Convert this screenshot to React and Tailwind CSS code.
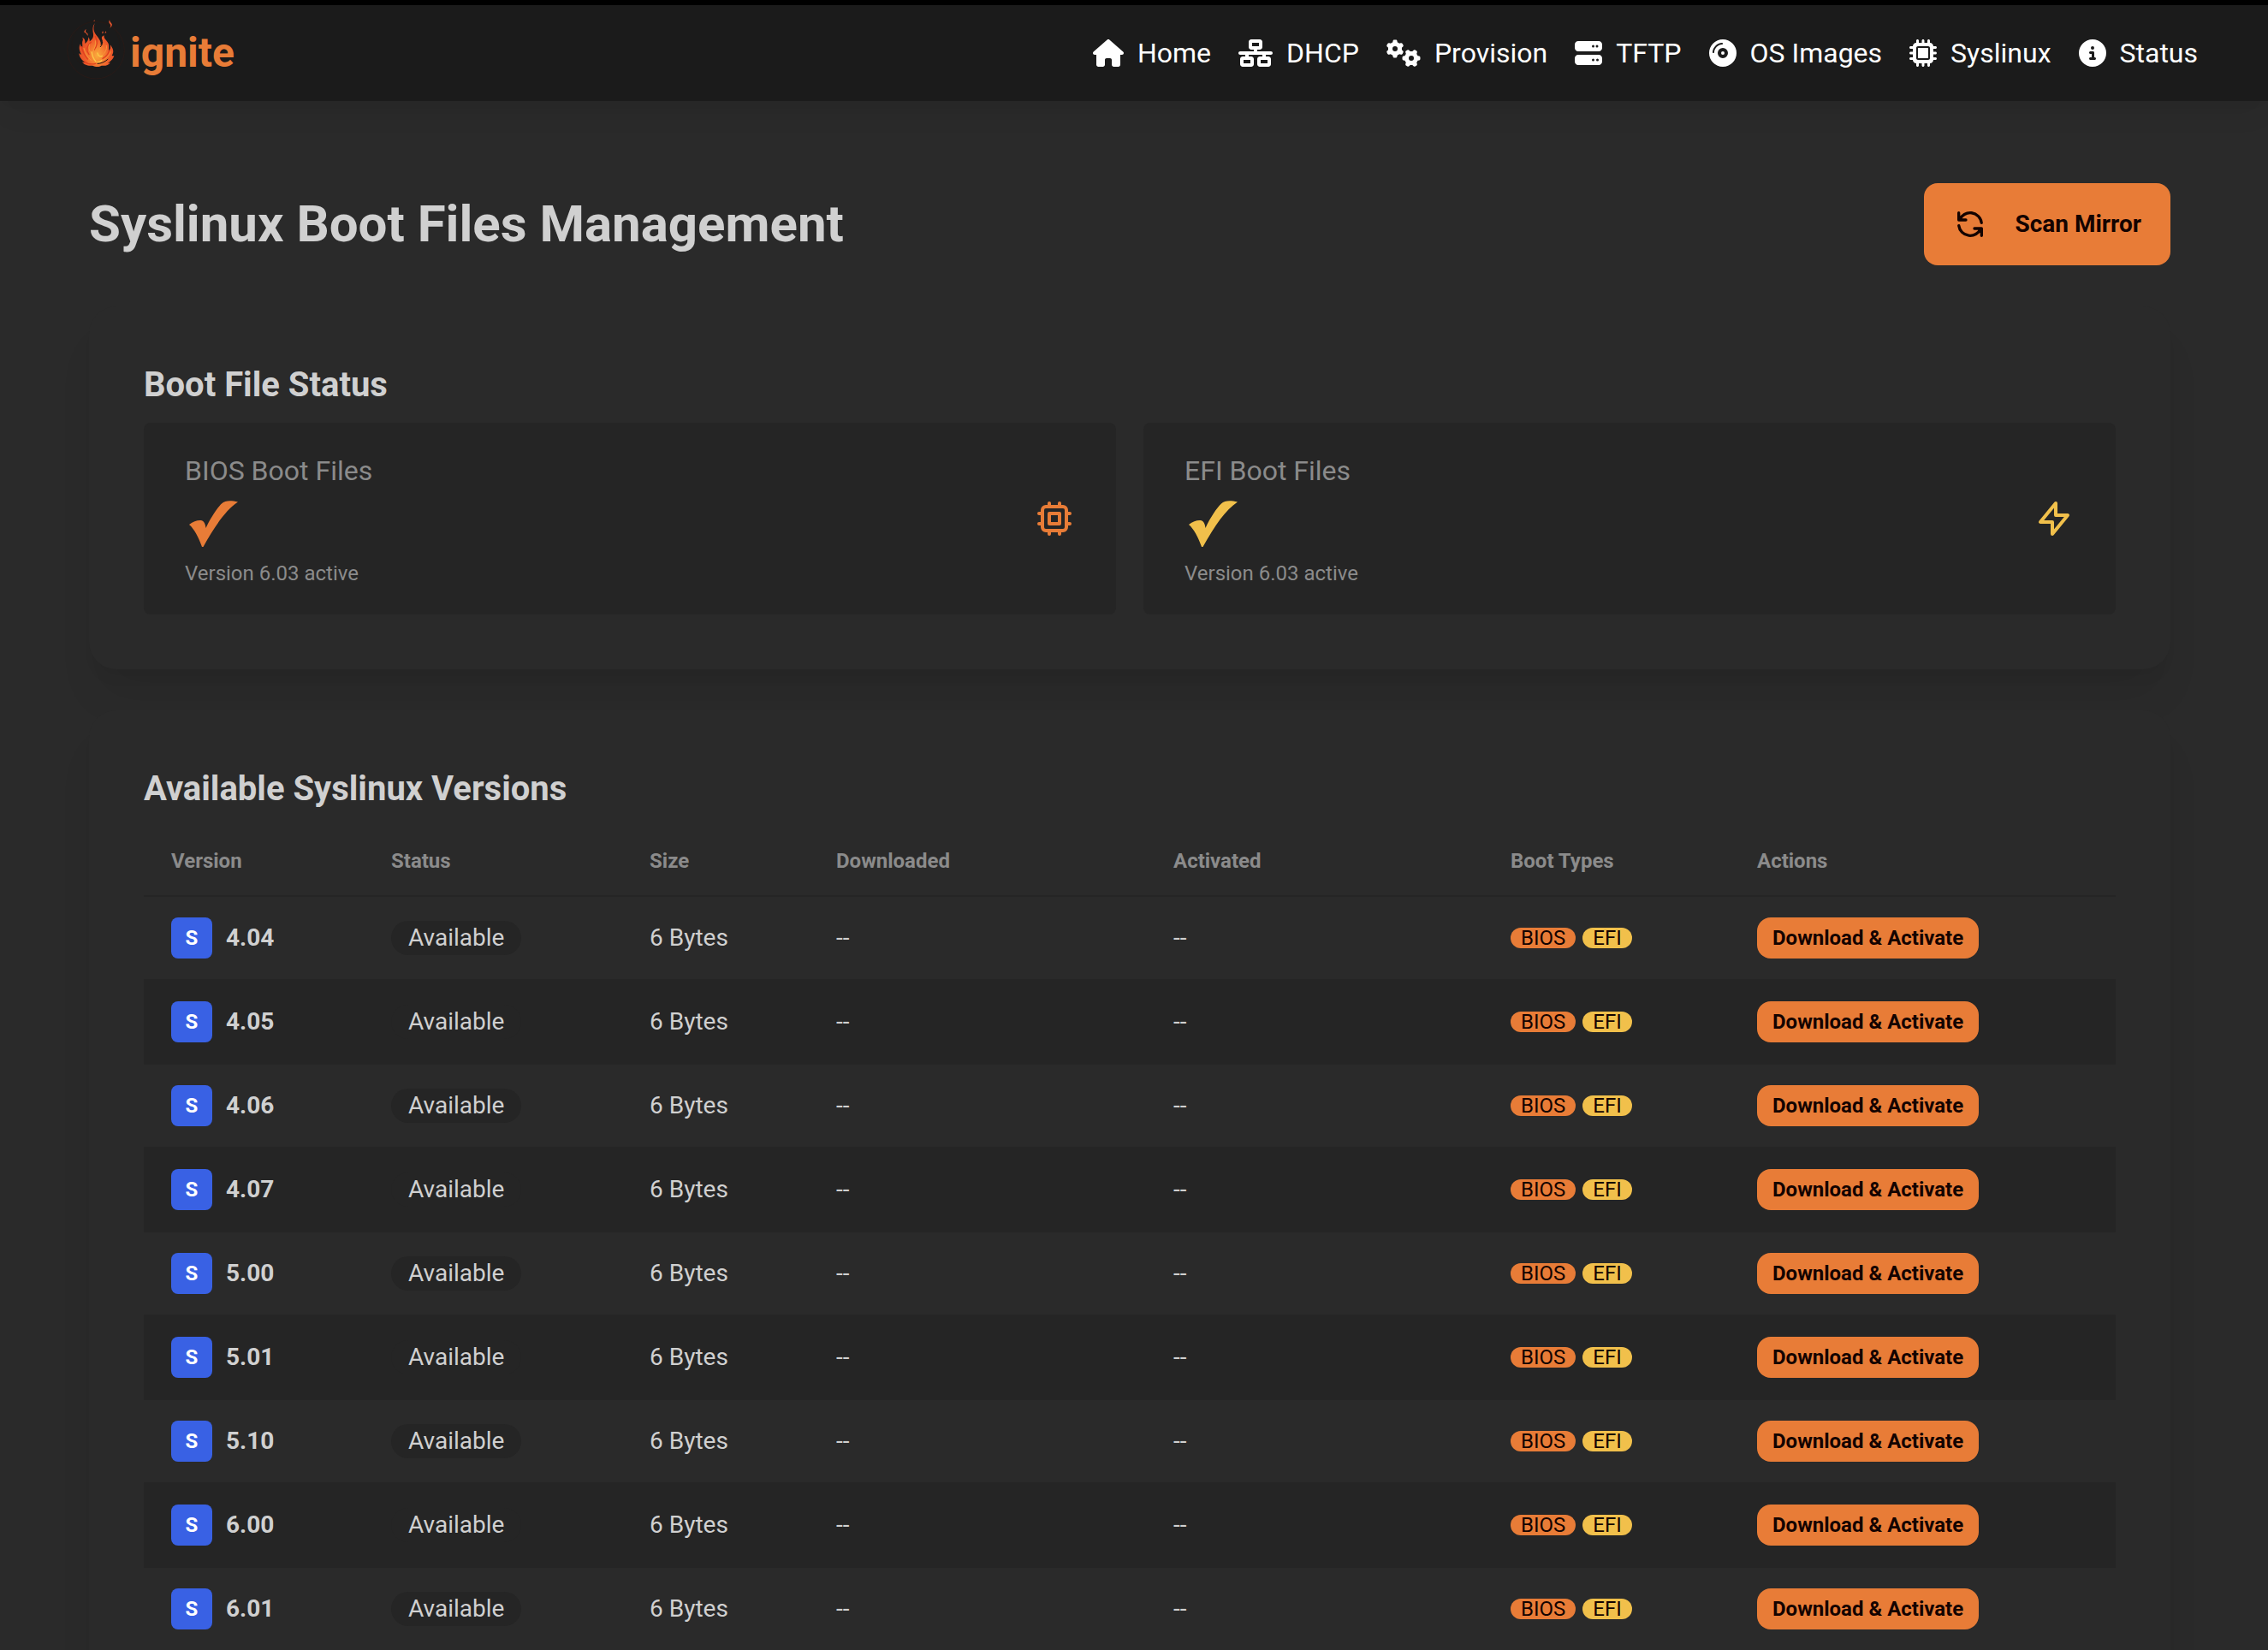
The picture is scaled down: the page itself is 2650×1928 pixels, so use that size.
import React from "react";
import {
  FaHouse,
  FaNetworkWired,
  FaGears,
  FaServer,
  FaCompactDisc,
  FaMicrochip,
  FaCircleInfo,
} from "react-icons/fa6";

const NAV = [
  { label: "Home", Icon: FaHouse, width: "w-9" },
  { label: "DHCP", Icon: FaNetworkWired, width: "w-10" },
  { label: "Provision", Icon: FaGears, width: "w-10" },
  { label: "TFTP", Icon: FaServer, width: "w-8" },
  { label: "OS Images", Icon: FaCompactDisc, width: "w-8" },
  { label: "Syslinux", Icon: FaMicrochip, width: "w-8" },
  { label: "Status", Icon: FaCircleInfo, width: "w-8" },
];

const VERSIONS = ["4.04", "4.05", "4.06", "4.07", "5.00", "5.01", "5.10", "6.00", "6.01"];

function FlameLogo() {
  return (
    <svg viewBox="18 30 204 240" className="h-20 w-[68px] shrink-0" aria-hidden="true">
      <defs>
        <radialGradient id="flame" cx="0.52" cy="0.74" r="0.62">
          <stop offset="0" stopColor="#f9ac3c" />
          <stop offset="0.3" stopColor="#f58232" />
          <stop offset="0.6" stopColor="#ee5a2a" />
          <stop offset="1" stopColor="#e04a24" />
        </radialGradient>
      </defs>
      <circle cx="120" cy="140" r="100" fill="none" stroke="#2a1a17" strokeWidth="2.5" />
      <circle cx="120" cy="122" r="84" fill="none" stroke="#211917" strokeWidth="2" />
      <path
        fill="url(#flame)"
        d="M117 45C108 62 113 76 122 88C132 101 139 109 137 124C144 117 146 109 141 100C139 94 143 90 149 88C147 97 154 103 160 110C168 120 166 132 165 142C171 138 173 130 170 121C181 134 185 147 176 158C179 160 181 160 184 159C181 172 172 178 162 186C166 185 170 184 172 182C164 193 152 196 140 194C130 200 118 198 108 194C92 196 77 191 72 180C76 183 80 184 84 183C72 176 62 166 61 150C64 153 66 155 69 155C61 140 60 127 66 118C67 125 68 129 72 133C75 121 70 116 74 106C76 100 74 98 72 95C82 98 83 108 82 117C89 112 95 104 94 94C97 99 99 104 98 109C109 101 112 94 111 83C109 69 107 56 117 45Z"
      />
      <path
        fill="none"
        stroke="#e0401f"
        strokeWidth="4"
        strokeLinecap="round"
        d="M70 128C73 145 80 158 91 171M103 112C88 125 84 139 96 155M118 92C128 110 126 124 114 139M166 143C163 155 155 163 144 169M79 179C92 190 107 190 119 187"
      />
      <path
        fill="none"
        stroke="#f8983a"
        strokeWidth="3"
        strokeLinecap="round"
        d="M78 133C82 150 90 163 103 176M98 120C93 133 97 143 107 154M119 107C122 122 113 132 111 146C110 158 114 166 120 178M137 130C127 143 127 154 134 164M157 124C160 139 151 149 143 157M172 146C167 160 155 170 142 177"
      />
      <path
        fill="none"
        stroke="#fbc848"
        strokeWidth="4"
        strokeLinecap="round"
        d="M106 146C106 160 112 170 120 180M126 150C129 160 134 164 142 160M140 176C134 181 130 183 126 181"
      />
      <path
        fill="none"
        stroke="#231512"
        strokeWidth="3"
        strokeLinecap="round"
        d="M162 172C150 182 138 187 126 187M136 128C140 124 143 118 143 112"
      />
      <path
        fill="#e0532c"
        d="M168 34C164 40 166 45 170 49C173 53 172 57 169 62C177 57 179 50 174 45C170 41 169 38 168 34ZM86 66C80 70 77 76 82 79C88 80 88 86 91 90C94 83 90 80 86 78C83 75 84 71 86 66ZM115 33L112 39L116 38ZM144 72L141 82L147 79ZM155 73L151 80L157 79Z"
      />
    </svg>
  );
}

function LineIcon({ d, className }) {
  return (
    <svg
      viewBox="0 0 24 24"
      fill="none"
      stroke="currentColor"
      strokeWidth="2"
      strokeLinecap="round"
      strokeLinejoin="round"
      className={className}
      aria-hidden="true"
    >
      <path d={d} />
    </svg>
  );
}

const REFRESH =
  "M4 4v5h.582m15.356 2A8.001 8.001 0 004.582 9m0 0H9m11 11v-5h-.581m0 0a8.003 8.003 0 01-15.357-2m15.357 2H15";
const CHIP =
  "M9 3v2m6-2v2M9 19v2m6-2v2M5 9H3m2 6H3m18-6h-2m2 6h-2M7 19h10a2 2 0 002-2V7a2 2 0 00-2-2H7a2 2 0 00-2 2v10a2 2 0 002 2zM9 9h6v6H9V9z";
const BOLT = "M13 10V3L4 14h7v7l9-11h-7z";

function Card({ title, children }) {
  return (
    <section className="mt-12 rounded-[32px] bg-[#2a2a2a] p-16 shadow-[0_40px_50px_-10px_rgba(0,0,0,0.07),0_16px_20px_-12px_rgba(0,0,0,0.08)]">
      <h2 className="mb-4 text-[40px] leading-[56px] font-bold">{title}</h2>
      {children}
    </section>
  );
}

function Stat({ title, desc, icon, color }) {
  return (
    <div className="flex items-center justify-between rounded-lg bg-[#252525] px-12 py-8">
      <div>
        <div className="text-[32px] leading-[48px] text-[#8b8b8b]">{title}</div>
        <div className={`flex h-20 items-center ${color}`}>
          <svg viewBox="0 0 68 58" className="h-[58px] w-[68px]" fill="currentColor" role="img" aria-label="Active">
            <path d="M5 28C10 24 15 22.500 19 23C23 24 24 28 24.500 32C30 20 38 8 43 3.500C47-.5 54-.5 62 1.500C48 11 36 28 21.500 54H20C16 43 11 33 5 28Z" />
          </svg>
        </div>
        <div className="text-2xl leading-8 text-[#8b8b8b]">{desc}</div>
      </div>
      <LineIcon d={icon} className={`size-12 ${color}`} />
    </div>
  );
}

export default function App() {
  return (
    <div className="h-screen overflow-hidden bg-[#2a2a2a] font-['Roboto',sans-serif] text-[#d0d0d0]">
      <header className="flex h-[118px] items-center justify-between border-t-[6px] border-black bg-[#1b1b1b] pr-[82px] pl-[78px] shadow-[0_20px_30px_-6px_rgba(0,0,0,0.06),0_8px_12px_-8px_rgba(0,0,0,0.05)]">
        <a href="#home" className="flex items-center gap-1.5 text-5xl leading-none font-bold text-[#e87c37]">
          <FlameLogo />
          ignite
        </a>
        <nav className="flex items-center gap-8 text-[32px] leading-[48px] text-white">
          {NAV.map(({ label, Icon, width }) => (
            <a key={label} href="#" className="flex items-center gap-4">
              <Icon aria-hidden="true" className={`h-8 shrink-0 ${width}`} />
              {label}
            </a>
          ))}
        </nav>
      </header>

      <main className="pt-24 pr-[114px] pl-[104px]">
        <div className="flex items-center justify-between">
          <h1 className="text-6xl leading-[72px] font-bold">Syslinux Boot Files Management</h1>
          <button
            type="button"
            className="flex h-24 items-center gap-8 rounded-2xl bg-[#e87c37] px-[34px] text-[28px] font-bold text-[#140300]"
          >
            <LineIcon d={REFRESH} className="size-10" />
            Scan Mirror
          </button>
        </div>

        <Card title="Boot File Status">
          <div className="grid grid-cols-2 gap-8">
            <Stat title="BIOS Boot Files" desc="Version 6.03 active" icon={CHIP} color="text-[#e87c37]" />
            <Stat title="EFI Boot Files" desc="Version 6.03 active" icon={BOLT} color="text-[#f1c04b]" />
          </div>
        </Card>

        <Card title="Available Syslinux Versions">
          <table className="w-full table-fixed border-separate border-spacing-0 text-left text-[28px] leading-10">
            <thead className="text-2xl leading-8 text-[#8b8b8b]">
              <tr className="*:border-b-2 *:border-[#252525] *:px-8 *:py-6 *:font-bold">
                <th className="w-[257px]">Version</th>
                <th className="w-[302px]">Status</th>
                <th className="w-[218px]">Size</th>
                <th className="w-[394px]">Downloaded</th>
                <th className="w-[394px]">Activated</th>
                <th className="w-[288px]">Boot Types</th>
                <th className="w-[451px]">Actions</th>
              </tr>
            </thead>
            <tbody>
              {VERSIONS.map((v) => (
                <tr key={v} className="even:bg-[#252525] *:border-b-2 *:border-[#252525] *:px-8 *:py-6">
                  <td>
                    <div className="flex items-center gap-4 font-bold">
                      <span className="flex size-12 items-center justify-center rounded-lg bg-[#3961e4] text-2xl text-white">
                        S
                      </span>
                      {v}
                    </div>
                  </td>
                  <td>
                    <div className="flex h-10 w-fit items-center rounded-full bg-[#252525] px-5">Available</div>
                  </td>
                  <td>6 Bytes</td>
                  <td>--</td>
                  <td>--</td>
                  <td>
                    <div className="flex gap-2 text-2xl leading-6 text-[#140300]">
                      <span className="rounded-full bg-[#e87c37] px-3">BIOS</span>
                      <span className="rounded-full bg-[#f1c04b] px-3">EFI</span>
                    </div>
                  </td>
                  <td>
                    <button
                      type="button"
                      className="flex h-12 items-center rounded-2xl bg-[#e87c37] px-[18px] text-2xl font-bold text-[#140300]"
                    >
                      Download &amp; Activate
                    </button>
                  </td>
                </tr>
              ))}
            </tbody>
          </table>
        </Card>
      </main>
    </div>
  );
}
